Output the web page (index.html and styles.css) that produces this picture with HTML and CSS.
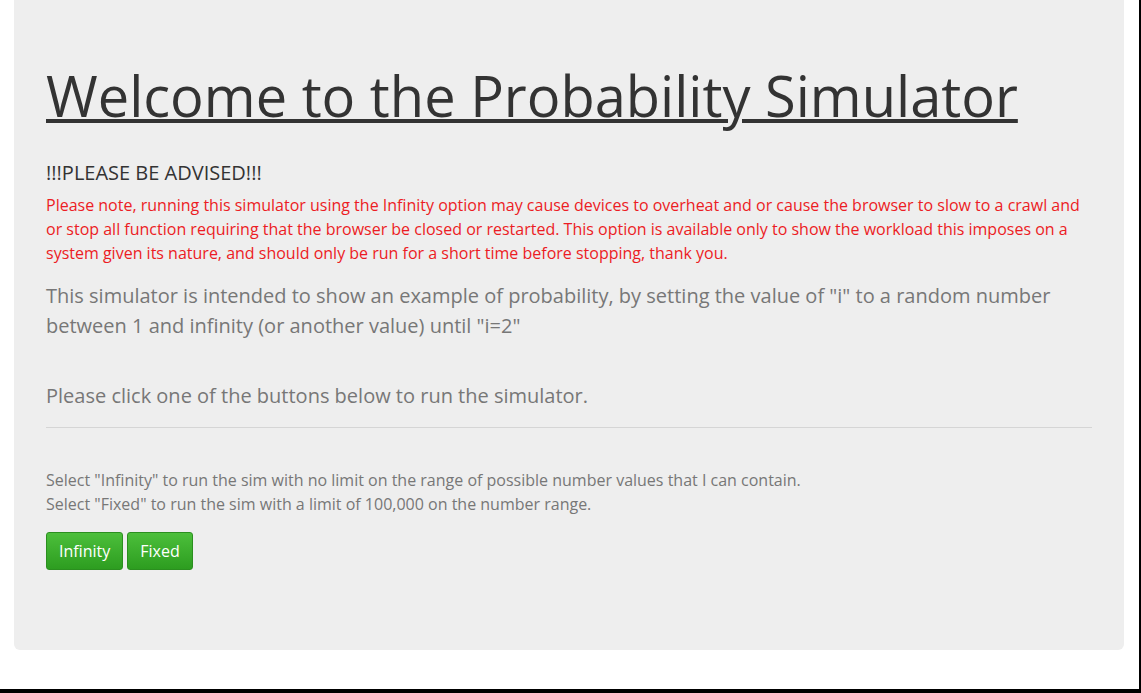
FILE: index.html
```html
<!DOCTYPE html>
<html lang="en">
<head>
<meta charset="utf-8">
<title>Probability Simulator</title>
<link rel="stylesheet" href="styles.css">
</head>
<body>
<div class="frame">
  <div class="jumbotron">
    <h1 class="title">Welcome to the Probability Simulator</h1>
    <p class="advise">!!!PLEASE BE ADVISED!!!</p>
    <p class="warning">Please note, running this simulator using the Infinity option may cause devices to overheat and or cause the browser to slow to a crawl and or stop all function requiring that the browser be closed or restarted. This option is available only to show the workload this imposes on a system given its nature, and should only be run for a short time before stopping, thank you.</p>
    <p class="lead">This simulator is intended to show an example of probability, by setting the value of "i" to a random number between 1 and infinity (or another value) until "i=2"</p>
    <p class="lead click">Please click one of the buttons below to run the simulator.</p>
    <hr class="rule">
    <p class="info">Select "Infinity" to run the sim with no limit on the range of possible number values that I can contain.<br>Select "Fixed" to run the sim with a limit of 100,000 on the number range.</p>
    <div class="buttons">
      <button class="btn">Infinity</button>
      <button class="btn">Fixed</button>
    </div>
  </div>
</div>
</body>
</html>
```

FILE: styles.css
```css
html, body {
  margin: 0;
  padding: 0;
  background: #fff;
}

body {
  font-family: "Open Sans", "Liberation Sans", sans-serif;
  color: #333;
}

.frame {
  box-sizing: border-box;
  width: 1141px;
  height: 693px;
  border-right: 2px solid #000;
  border-bottom: 4px solid #000;
  overflow: hidden;
}

.jumbotron {
  margin: 0 15px 0 14px;
  padding: 64px 32px 80px;
  background: #eee;
  border-radius: 0 0 6px 6px;
}

.title {
  margin: 0;
  font-size: 56px;
  line-height: 62px;
  font-weight: 400;
  color: #333;
  text-decoration: underline;
  text-decoration-thickness: 4px;
  white-space: nowrap;
}

.advise {
  margin: 32px 0 0;
  font-size: 20px;
  line-height: 30px;
  color: #333;
}

.warning {
  margin: 5px 0 0;
  font-size: 16px;
  line-height: 24px;
  color: #ec1c24;
}

.lead {
  margin: 16px 0 0;
  font-size: 20px;
  line-height: 30px;
  color: #777;
}

.lead.click {
  margin-top: 40px;
}

.rule {
  margin: 16px 0 0;
  border: 0;
  border-top: 1px solid #d5d5d5;
}

.info {
  margin: 40px 0 0;
  font-size: 16px;
  line-height: 24px;
  color: #777;
}

.buttons {
  margin-top: 16px;
  display: flex;
  gap: 4px;
}

.btn {
  font-family: inherit;
  font-size: 16px;
  line-height: 24px;
  padding: 6px 12px;
  color: #fff;
  background: linear-gradient(#4cbf3b, #2d9d20);
  border: 1px solid #2b8f1f;
  border-radius: 3px;
}
```
